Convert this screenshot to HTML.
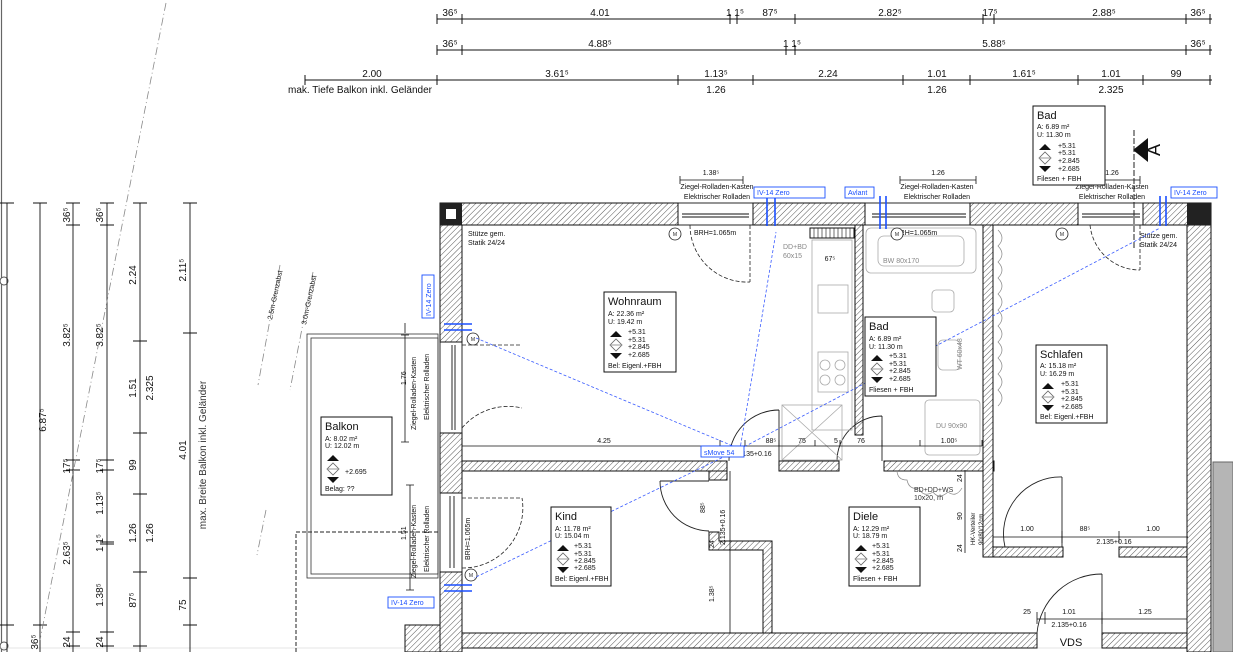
<!DOCTYPE html>
<html><head><meta charset="utf-8"><style>
html,body{margin:0;padding:0;background:#fff;width:1233px;height:652px;overflow:hidden}
svg{display:block;font-family:"Liberation Sans",sans-serif}
.t{font-size:10px;fill:#111}
.s{font-size:7px;fill:#111}
.b{font-size:7px;fill:#1a4fff}
.g{font-size:7px;fill:#888}
</style></head><body>
<svg width="1233" height="652" viewBox="0 0 1233 652">
<defs>
<pattern id="h" width="4" height="4" patternUnits="userSpaceOnUse" patternTransform="rotate(45)">
<rect width="4" height="4" fill="#fff"/><line x1="0" y1="0" x2="0" y2="4" stroke="#444" stroke-width="0.9"/></pattern>
<g id="lbl">
<polygon points="0,0 6,-6 12,0" fill="#111"/>
<polygon points="0,8 6,2 12,8 6,14" fill="#fff" stroke="#666" stroke-width="0.8"/>
<line x1="0" y1="8" x2="12" y2="8" stroke="#999"/>
<polygon points="0,16 12,16 6,22" fill="#111"/>
</g>
</defs>

<!-- left border -->
<line x1="1.5" y1="0" x2="1.5" y2="652" stroke="#666" stroke-width="1.2"/>
<circle cx="4" cy="281" r="4" fill="#fff" stroke="#555"/>
<circle cx="4" cy="646" r="4" fill="#fff" stroke="#555"/>
<line x1="0" y1="648" x2="1233" y2="648" stroke="#ccc" stroke-width="0.6"/>

<!-- top dims -->
<g stroke="#111" stroke-width="0.9">
<line x1="437" y1="19" x2="1212" y2="19"/>
<line x1="437" y1="50" x2="1212" y2="50"/>
<line x1="305" y1="80" x2="1212" y2="80"/>
</g>
<g stroke="#111" stroke-width="1">
<path d="M437 14v10M462 14v10M730 14v10M737 14v10M795 14v10M983 14v10M994 14v10M1186 14v10M1210 14v10"/>
<path d="M437 45v10M462 45v10M786 45v10M795 45v10M1186 45v10M1210 45v10"/>
<path d="M305 75v10M437 75v10M678 75v10M753 75v10M903 75v10M970 75v10M1078 75v10M1143 75v10M1210 75v10"/>
</g>
<g class="t" text-anchor="middle" font-size="10">
<text x="450" y="16">36⁵</text><text x="600" y="16">4.01</text><text x="735" y="16">1 1⁵</text><text x="770" y="16">87⁵</text>
<text x="890" y="16">2.82⁵</text><text x="990" y="16">17⁵</text><text x="1104" y="16">2.88⁵</text><text x="1198" y="16">36⁵</text>
<text x="450" y="47">36⁵</text><text x="600" y="47">4.88⁵</text><text x="792" y="47">1 1⁵</text><text x="994" y="47">5.88⁵</text><text x="1198" y="47">36⁵</text>
<text x="372" y="77">2.00</text><text x="557" y="77">3.61⁵</text><text x="716" y="77">1.13⁵</text><text x="828" y="77">2.24</text>
<text x="937" y="77">1.01</text><text x="1024" y="77">1.61⁵</text><text x="1111" y="77">1.01</text><text x="1176" y="77">99</text>
<text x="716" y="93">1.26</text><text x="937" y="93">1.26</text><text x="1111" y="93">2.325</text>
</g>
<text x="288" y="93" class="t" font-size="9.5">mak. Tiefe Balkon inkl. Geländer</text>

<!-- left vertical dims -->
<g stroke="#111" stroke-width="0.9">
<line x1="7" y1="203" x2="7" y2="652"/>
<line x1="40" y1="203" x2="40" y2="652"/>
<line x1="73" y1="203" x2="73" y2="652"/>
<line x1="107" y1="203" x2="107" y2="652"/>
<line x1="140" y1="203" x2="140" y2="652"/>
<line x1="190" y1="203" x2="190" y2="652"/>
<path d="M0 203h14M33 203h14M66 203h14M100 203h14M133 203h14M183 203h14M33 625h14M66 225h14M100 225h14M66 460h14M66 470h14M100 460h14M100 470h14M133 341h14M133 433h14M133 494h14M133 572h14M183 333h14M183 578h14M66 632h14M100 632h14M100 542h14M100 544h14M0 625h14M66 646h14M100 646h14M133 646h14M183 625h14"/>
</g>
<g class="t" font-size="10" text-anchor="middle">
<text transform="translate(46,420) rotate(-90)">6.87⁵</text>
<text transform="translate(70,215) rotate(-90)">36⁵</text>
<text transform="translate(103,215) rotate(-90)">36⁵</text>
<text transform="translate(70,335) rotate(-90)">3.82⁵</text>
<text transform="translate(103,335) rotate(-90)">3.82⁵</text>
<text transform="translate(70,466) rotate(-90)">17⁵</text>
<text transform="translate(103,466) rotate(-90)">17⁵</text>
<text transform="translate(70,553) rotate(-90)">2.63⁵</text>
<text transform="translate(103,503) rotate(-90)">1.13⁵</text>
<text transform="translate(103,543) rotate(-90)">1 1⁵</text>
<text transform="translate(103,595) rotate(-90)">1.38⁵</text>
<text transform="translate(136,600) rotate(-90)">87⁵</text>
<text transform="translate(136,275) rotate(-90)">2.24</text>
<text transform="translate(136,388) rotate(-90)">1.51</text>
<text transform="translate(153,388) rotate(-90)">2.325</text>
<text transform="translate(136,465) rotate(-90)">99</text>
<text transform="translate(136,533) rotate(-90)">1.26</text>
<text transform="translate(153,533) rotate(-90)">1.26</text>
<text transform="translate(186,270) rotate(-90)">2.11⁵</text>
<text transform="translate(186,450) rotate(-90)">4.01</text>
<text transform="translate(186,605) rotate(-90)">75</text>
<text transform="translate(206,455) rotate(-90)" fill="#333">max. Breite Balkon inkl. Geländer</text>
<text transform="translate(38,642) rotate(-90)">36⁵</text>
<text transform="translate(70,642) rotate(-90)">24</text>
<text transform="translate(103,642) rotate(-90)">24</text>
</g>
<!-- dash-dot lines -->
<g stroke="#888" stroke-width="0.8" stroke-dasharray="8,3,1,3" fill="none">
<line x1="166" y1="3" x2="40" y2="640"/>
<line x1="280" y1="265" x2="258" y2="385"/>
<line x1="313" y1="272" x2="290" y2="390"/>
<line x1="266" y1="510" x2="257" y2="555"/>
</g>
<text transform="translate(272,320) rotate(-78)" class="s" font-size="6">2.5m-Grenzabst</text>
<text transform="translate(306,325) rotate(-78)" class="s" font-size="6">3.0m-Grenzabst</text>

<!-- balcony -->
<rect x="307" y="334" width="131" height="244" fill="none" stroke="#333" stroke-width="0.8"/>
<rect x="311" y="338" width="127" height="236" fill="none" stroke="#333" stroke-width="0.8"/>
<path d="M296 652V532H438" fill="none" stroke="#222" stroke-dasharray="4,2"/>
<g class="s" font-size="8">
<text transform="translate(416,430) rotate(-90)">Ziegel-Rolladen-Kasten</text>
<text transform="translate(429,420) rotate(-90)">Elektrischer Rolladen</text>
<text transform="translate(406,385) rotate(-90)">1.76</text>
<text transform="translate(416,578) rotate(-90)">Ziegel-Rolladen-Kasten</text>
<text transform="translate(429,572) rotate(-90)">Elektrischer Rolladen</text>
<text transform="translate(406,540) rotate(-90)">1.51</text>
<text transform="translate(470,560) rotate(-90)">BRH=1.065m</text>
</g>
<path d="M405 333v-10M405 333v-10M401 335h8M401 442h8M405 335v107M410 485v105M406 485h8M406 590h8" stroke="#111" stroke-width="0.8"/>

<!-- walls -->
<g fill="url(#h)" stroke="#111" stroke-width="1">
<rect x="440" y="203" width="238" height="22"/>
<rect x="753" y="203" width="112" height="22"/>
<rect x="970" y="203" width="108" height="22"/>
<rect x="1143" y="203" width="68" height="22"/>
<rect x="440" y="225" width="22" height="117"/>
<rect x="440" y="433" width="22" height="60"/>
<rect x="440" y="572" width="22" height="80"/>
<rect x="1187" y="225" width="24" height="427"/>
<rect x="462" y="461" width="265" height="10"/>
<path d="M709 471h18v9h-18z"/>
<path d="M709 532h10v9h53v92h-9v-83h-54z"/>
<rect x="779" y="461" width="60" height="10"/>
<rect x="884" y="461" width="110" height="10"/>
<rect x="855" y="225" width="8" height="210"/>
<rect x="983" y="225" width="10" height="332"/>
<rect x="993" y="547" width="70" height="10"/>
<rect x="1119" y="547" width="68" height="10"/>
<rect x="462" y="633" width="575" height="15"/>
<rect x="1102" y="633" width="85" height="15"/>
<rect x="405" y="625" width="35" height="27"/>
</g>
<rect x="440" y="203" width="22" height="22" fill="#222"/>
<rect x="446" y="209" width="10" height="10" fill="#fff"/>
<rect x="1187" y="203" width="24" height="22" fill="#222"/>
<rect x="1213" y="462" width="20" height="190" fill="#b5b5b5" stroke="#666"/>
<!-- windows -->
<g fill="none" stroke="#111" stroke-width="0.9">
<rect x="678" y="203" width="75" height="22"/><line x1="682" y1="214" x2="749" y2="214"/><line x1="682" y1="217" x2="749" y2="217"/>
<rect x="865" y="203" width="105" height="22"/><line x1="872" y1="214" x2="966" y2="214"/><line x1="872" y1="217" x2="966" y2="217"/>
<rect x="1078" y="203" width="65" height="22"/><line x1="1082" y1="214" x2="1140" y2="214"/><line x1="1082" y1="217" x2="1140" y2="217"/>
<rect x="440" y="342" width="22" height="91"/><line x1="452" y1="345" x2="452" y2="430"/><line x1="455" y1="345" x2="455" y2="430"/>
<rect x="440" y="493" width="22" height="79"/><line x1="450" y1="496" x2="450" y2="568"/><line x1="454" y1="496" x2="454" y2="568"/>
</g>
<!-- doors -->
<g fill="none" stroke="#222" stroke-width="0.8" stroke-dasharray="4,2">
<path d="M750 225v57M690 225a57 57 0 0 0 60 57"/>
<path d="M1140 225v45M1090 225a50 50 0 0 0 50 45"/>
<path d="M462 345h60M462 428a60 60 0 0 1 60-20M462 498h60M462 568a60 60 0 0 0 60-70"/>
</g>
<g fill="none" stroke="#222" stroke-width="0.9">
<path d="M779 410v51M779 410a50 50 0 0 0-50 51"/>
<path d="M660 481h49M660 481a50 50 0 0 0 49 50"/>
<path d="M882 416v45M837 461a45 45 0 0 1 45-45"/>
<path d="M1062 477v70M1062 477a57 57 0 0 0-57 70"/>
<path d="M1102 574v59M1102 574a65 65 0 0 0-65 59"/>
</g>
<!-- kitchen / bath fixtures (grey) -->
<g fill="none" stroke="#aaa" stroke-width="0.8">
<rect x="812" y="240" width="40" height="190"/>
<rect x="818" y="285" width="30" height="28"/>
<rect x="818" y="352" width="30" height="40"/>
<circle cx="825" cy="365" r="5"/><circle cx="840" cy="365" r="5"/><circle cx="825" cy="380" r="5"/><circle cx="840" cy="380" r="5"/>
<rect x="866" y="228" width="110" height="45" rx="5"/>
<rect x="878" y="236" width="86" height="30" rx="6"/>
<rect x="932" y="290" width="22" height="22" rx="4"/>
<rect x="938" y="340" width="22" height="30" rx="5"/>
<rect x="925" y="400" width="55" height="55" rx="4"/>
<rect x="782" y="405" width="60" height="55"/>
<path d="M782 405l60 55M842 405l-60 55"/>
</g>
<rect x="810" y="228" width="44" height="10" fill="none" stroke="#111"/>
<path d="M814 228v10M818 228v10M822 228v10M826 228v10M830 228v10M834 228v10M838 228v10M842 228v10M846 228v10M850 228v10" stroke="#111" stroke-width="0.6"/>
<g class="g">
<text x="883" y="263">BW 80x170</text>
<text x="936" y="428">DU 90x90</text>
<text transform="translate(962,370) rotate(-90)">WT 60x48</text>
</g>
<!-- clouds -->
<path d="M998 230q8 8 0 16q8 8 0 16q8 8 0 16q8 8 0 16q8 8 0 16q8 8 0 16q8 8 0 16q8 8 0 16q8 8 0 16q8 8 0 16q8 8 0 16" fill="none" stroke="#888" stroke-width="0.7"/>
<path d="M897 470q0 10 10 10q2 10 12 8q4 10 14 4q6 8 15 0q8 6 14 -4" fill="none" stroke="#888" stroke-width="0.7"/>

<!-- misc text -->
<g class="s">
<text x="468" y="236">Stütze gem.</text><text x="468" y="245">Statik 24/24</text>
<text x="1140" y="238">Stütze gem.</text><text x="1140" y="247">Statik 24/24</text>
<text x="694" y="235">BRH=1.065m</text>
<text x="895" y="235">BRH=1.065m</text>
<text x="783" y="249" fill="#888">DD+BD</text><text x="783" y="258" fill="#888">60x15</text>
<text x="914" y="492" fill="#333">BD+DD+WS</text><text x="914" y="500" fill="#333">10x20, rh</text>
</g>
<g class="s" font-size="9" text-anchor="middle">
<text x="711" y="175">1.38⁵</text>
<text x="938" y="175">1.26</text>
<text x="1112" y="175">1.26</text>
<text x="717" y="189">Ziegel-Rolladen-Kasten</text><text x="717" y="199">Elektrischer Rolladen</text>
<text x="937" y="189">Ziegel-Rolladen-Kasten</text><text x="937" y="199">Elektrischer Rolladen</text>
<text x="1112" y="189">Ziegel-Rolladen-Kasten</text><text x="1112" y="199">Elektrischer Rolladen</text>
<text x="604" y="443">4.25</text><text x="771" y="443">88⁵</text><text x="802" y="443">75</text><text x="836" y="443">5</text><text x="861" y="443">76</text><text x="949" y="443">1.00⁵</text>
<text x="754" y="456">2.135+0.16</text>
<text x="1027" y="531">1.00</text><text x="1085" y="531">88⁵</text><text x="1153" y="531">1.00</text>
<text x="1114" y="544">2.135+0.16</text>
<text x="1027" y="614">25</text><text x="1069" y="614">1.01</text><text x="1145" y="614">1.25</text>
<text x="1069" y="627">2.135+0.16</text>
<text x="1071" y="646" font-size="11">VDS</text>
<text x="830" y="261">67⁵</text>
</g>
<g class="s" font-size="9">
<text transform="translate(705,513) rotate(-90)">88⁵</text>
<text transform="translate(725,545) rotate(-90)">2.135+0.16</text>
<text transform="translate(714,548) rotate(-90)">24</text>
<text transform="translate(714,602) rotate(-90)">1.38⁵</text>
<text transform="translate(962,482) rotate(-90)">24</text>
<text transform="translate(962,520) rotate(-90)">90</text>
<text transform="translate(962,552) rotate(-90)">24</text>
<text transform="translate(975,545) rotate(-90)" font-size="6">HK-Verteiler</text>
<text transform="translate(983,545) rotate(-90)" font-size="6">90/80/12cm</text>
</g>
<g stroke="#111" stroke-width="0.8" fill="none">
<path d="M680 180h63M680 176v8M743 176v8M900 180h76M900 176v8M976 176v8M1075 180h65M1075 176v8M1140 176v8"/>
<path d="M462 446h520M720 446v-6M745 446v-6M779 446v-6M815 446v-6M840 446v-6M882 446v-6M920 446v-6M982 446v-6"/>
<path d="M993 537h195M1062 531v12M1119 531v12M1037 619h150M1037 612v12M1045 612v12M1102 612v12"/>
<path d="M730 471v162M965 470v83"/>
</g>
<!-- M circles -->
<g fill="#fff" stroke="#222" stroke-width="0.8">
<circle cx="675" cy="234" r="6"/><circle cx="897" cy="234" r="6"/><circle cx="1062" cy="234" r="6"/>
<circle cx="473" cy="339" r="6"/><circle cx="471" cy="575" r="6"/>
</g>
<g font-size="5" text-anchor="middle" fill="#222"><text x="675" y="236">M</text><text x="897" y="236">M</text><text x="1062" y="236">M</text><text x="473" y="341">M</text><text x="471" y="577">M</text></g>

<!-- section marker -->
<polygon points="1133,150 1148,138 1148,162" fill="#111"/>
<line x1="1134" y1="130" x2="1134" y2="250" stroke="#222" stroke-dasharray="6,2"/>
<text transform="translate(1160,150) rotate(-90)" text-anchor="middle" font-size="18" fill="#111">A</text>

<!-- blue -->
<g stroke="#3a5cff" stroke-width="0.8" stroke-dasharray="3,2" fill="none">
<path d="M476 338L740 449L776 232M740 449L1160 228M740 449L474 578"/>
</g>
<g stroke="#1a4fff" stroke-width="1.6" fill="none">
<path d="M767 196v30M775 196v30M880 196v33M886 196v33M1160 196v30M1166 196v30M444 324h28M444 330h28M444 585h28M444 591h28"/>
</g>
<g fill="#fff" stroke="#1a4fff" stroke-width="0.9">
<rect x="754" y="187" width="71" height="11"/><rect x="845" y="187" width="29" height="11"/><rect x="1171" y="187" width="46" height="11"/>
<rect x="422" y="275" width="12" height="43"/><rect x="388" y="597" width="46" height="11"/><rect x="701" y="446" width="43" height="11"/>
</g>
<g class="b">
<text x="757" y="195">IV-14 Zero</text><text x="848" y="195">Avlant</text><text x="1174" y="195">IV-14 Zero</text>
<text transform="translate(431,316) rotate(-90)">IV-14 Zero</text><text x="391" y="605">IV-14 Zero</text><text x="704" y="455">sMove 54</text>
</g>

<!-- room labels -->
<g stroke="#111" fill="#fff" stroke-width="1">
<rect x="1033" y="106" width="72" height="79"/>
<rect x="604" y="292" width="72" height="80"/>
<rect x="865" y="317" width="71" height="79"/>
<rect x="1036" y="345" width="71" height="78"/>
<rect x="321" y="417" width="71" height="78"/>
<rect x="551" y="507" width="60" height="79"/>
<rect x="849" y="507" width="71" height="79"/>
</g>
<g class="s">
<text x="1037" y="119" font-size="11">Bad</text><text x="1037" y="129">A: 6.89 m²</text><text x="1037" y="137">U: 11.30 m</text>
<use href="#lbl" x="1039" y="150"/><text x="1058" y="148">+5.31</text><text x="1058" y="155">+5.31</text><text x="1058" y="163">+2.845</text><text x="1058" y="171">+2.685</text><text x="1037" y="181">Filesen + FBH</text>

<text x="608" y="305" font-size="11">Wohnraum</text><text x="608" y="316">A: 22.36 m²</text><text x="608" y="324">U: 19.42 m</text>
<use href="#lbl" x="610" y="337"/><text x="628" y="334">+5.31</text><text x="628" y="342">+5.31</text><text x="628" y="349">+2.845</text><text x="628" y="357">+2.685</text><text x="608" y="368">Bel: Eigenl.+FBH</text>

<text x="869" y="330" font-size="11">Bad</text><text x="869" y="341">A: 6.89 m²</text><text x="869" y="349">U: 11.30 m</text>
<use href="#lbl" x="871" y="361"/><text x="889" y="358">+5.31</text><text x="889" y="366">+5.31</text><text x="889" y="373">+2.845</text><text x="889" y="381">+2.685</text><text x="869" y="392">Fliesen + FBH</text>

<text x="1040" y="358" font-size="11">Schlafen</text><text x="1040" y="368">A: 15.18 m²</text><text x="1040" y="376">U: 16.29 m</text>
<use href="#lbl" x="1042" y="389"/><text x="1061" y="386">+5.31</text><text x="1061" y="394">+5.31</text><text x="1061" y="401">+2.845</text><text x="1061" y="409">+2.685</text><text x="1040" y="419">Bel: Eigenl.+FBH</text>

<text x="325" y="430" font-size="11">Balkon</text><text x="325" y="441">A: 8.02 m²</text><text x="325" y="448">U: 12.02 m</text>
<use href="#lbl" x="327" y="461"/><text x="345" y="474">+2.695</text><text x="325" y="491">Belag: ??</text>

<text x="555" y="520" font-size="11">Kind</text><text x="555" y="531">A: 11.78 m²</text><text x="555" y="538">U: 15.04 m</text>
<use href="#lbl" x="557" y="551"/><text x="574" y="548">+5.31</text><text x="574" y="556">+5.31</text><text x="574" y="563">+2.845</text><text x="574" y="570">+2.685</text><text x="555" y="581">Bel: Eigenl.+FBH</text>

<text x="853" y="520" font-size="11">Diele</text><text x="853" y="531">A: 12.29 m²</text><text x="853" y="538">U: 18.79 m</text>
<use href="#lbl" x="855" y="551"/><text x="872" y="548">+5.31</text><text x="872" y="556">+5.31</text><text x="872" y="563">+2.845</text><text x="872" y="570">+2.685</text><text x="853" y="581">Fliesen + FBH</text>
</g>
</svg>
</body></html>
